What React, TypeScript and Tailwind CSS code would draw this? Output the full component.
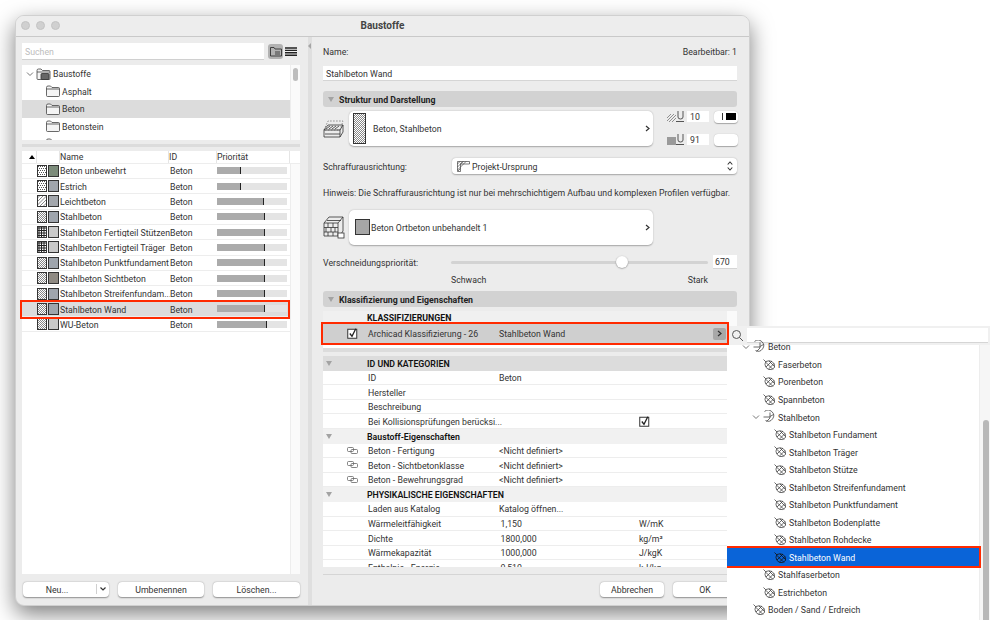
import React from "react";

const font = { fontFamily: '"Roboto", "Liberation Sans", sans-serif' };

function Hatch({ kind = "diag", w = 10, h = 12 }: { kind?: "diag" | "dots" | "grid" | "light"; w?: number; h?: number }) {
  const lines: React.ReactNode[] = [];
  if (kind === "grid") {
    for (let i = 2; i < w; i += 2.5) lines.push(<line key={"v" + i} x1={i} y1={0} x2={i} y2={h} stroke="#222" strokeWidth="1" />);
    for (let i = 2; i < h; i += 2.5) lines.push(<line key={"h" + i} x1={0} y1={i} x2={w} y2={i} stroke="#222" strokeWidth="1" />);
  } else if (kind === "dots") {
    for (let y = 1; y < h; y += 2) for (let x = (y % 4 === 1 ? 1 : 2); x < w; x += 2) lines.push(<rect key={x + "-" + y} x={x} y={y} width="1" height="1" fill="#555" />);
  } else {
    for (let i = -h; i < w + h; i += kind === "light" ? 3.5 : 2) lines.push(<line key={i} x1={i} y1={h} x2={i + h} y2={0} stroke="#555" strokeWidth="0.7" />);
  }
  return (
    <svg width={w} height={h} viewBox={`0 0 ${w} ${h}`} className="shrink-0">
      <rect x="0.5" y="0.5" width={w - 1} height={h - 1} fill="#fff" />
      {lines}
      <rect x="0.5" y="0.5" width={w - 1} height={h - 1} fill="none" stroke="#333" />
    </svg>
  );
}

function Folder({ w = 14, badge }: { w?: number; badge?: boolean }) {
  return (
    <svg width={w} height="12" viewBox="0 0 14 12" fill="none" stroke="#444" strokeWidth="0.8" className="shrink-0">
      <path d="M0.5 10.5V2.5Q0.5 1 2 1H4.5L6 2.5H12.5Q13.5 2.5 13.5 3.5V10.5Q13.5 11.5 12.5 11.5H1.5Q0.5 11.5 0.5 10.5Z" fill="#f4f4f4" />
      <path d="M0.5 4H13.5" />
      {badge && <rect x="4.5" y="5.5" width="8" height="6" rx="1" fill="#666" stroke="#333" />}
    </svg>
  );
}

function Chevron({ open }: { open?: boolean }) {
  return open ? (
    <svg width="8" height="6" viewBox="0 0 8 6" fill="none" stroke="#777" strokeWidth="1" className="shrink-0"><path d="M1 1.5L4 4.5L7 1.5" /></svg>
  ) : (
    <svg width="5" height="7" viewBox="0 0 5 7" fill="none" stroke="#333" strokeWidth="1.2" className="shrink-0"><path d="M1 1L4 3.5L1 6" /></svg>
  );
}

function Leaf({ color = "#444" }: { color?: string }) {
  return (
    <svg width="13" height="13" viewBox="0 0 13 13" fill="none" stroke={color} strokeWidth="0.8" className="shrink-0">
      <path d="M0.5 1.5L3.5 4.5" />
      <path d="M3 3.5Q6 2 9 3.5Q12.5 6 11.5 9.5Q9 12.5 5.5 11.5Q2 9.5 2 6.5Q2 5 3 3.5Z" />
      <path d="M3.5 5L10 11.5M3 9L9 3M6 3L11.5 8.5M5.5 11L11 5.5" />
    </svg>
  );
}

function Branch() {
  return (
    <svg width="13" height="13" viewBox="0 0 13 13" fill="none" stroke="#444" strokeWidth="0.8" className="shrink-0">
      <path d="M1.5 1.5A5.5 5.5 0 1 1 2.5 10.5" />
      <path d="M0.5 7H7M7 2.5V8L3.5 11.5M7 6.5L10.5 4.5" />
    </svg>
  );
}

function LinkIcon() {
  return (
    <svg width="11" height="7" viewBox="0 0 11 7" fill="none" stroke="#666" strokeWidth="0.8" className="shrink-0">
      <rect x="0.5" y="0.5" width="6" height="4" rx="1" />
      <rect x="4" y="2.5" width="6.5" height="4" rx="1" />
    </svg>
  );
}

function Check({ size = 11 }: { size?: number }) {
  return (
    <svg width={size} height={size} viewBox="0 0 11 11" fill="none" className="shrink-0">
      <rect x="0.75" y="1.25" width="9" height="9" fill="#fff" stroke="#333" strokeWidth="1" />
      <path d="M2.8 5.5L5 8.2L8.8 0.8" stroke="#222" strokeWidth="1.3" />
    </svg>
  );
}

function Tri() {
  return <span className="w-0 h-0 border-l-[3.5px] border-r-[3.5px] border-t-[5px] border-l-transparent border-r-transparent border-t-[#a3a3a3] shrink-0" />;
}

const materials: { name: string; kind: "diag" | "dots" | "grid" | "light"; color: string; pr: number }[] = [
  { name: "Beton unbewehrt", kind: "dots", color: "#7b8b7a", pr: 23 },
  { name: "Estrich", kind: "dots", color: "#a0a5ac", pr: 23 },
  { name: "Leichtbeton", kind: "light", color: "#a3a7ad", pr: 46 },
  { name: "Stahlbeton", kind: "diag", color: "#9fa5ad", pr: 47 },
  { name: "Stahlbeton Fertigteil Stützen", kind: "grid", color: "#c9c9c9", pr: 47 },
  { name: "Stahlbeton Fertigteil Träger", kind: "grid", color: "#c9c9c9", pr: 47 },
  { name: "Stahlbeton Punktfundament", kind: "diag", color: "#9fa5ad", pr: 47 },
  { name: "Stahlbeton Sichtbeton", kind: "diag", color: "#8f8a83", pr: 47 },
  { name: "Stahlbeton Streifenfundam...", kind: "diag", color: "#9fa5ad", pr: 47 },
  { name: "Stahlbeton Wand", kind: "diag", color: "#9fa5ad", pr: 47 },
  { name: "WU-Beton", kind: "diag", color: "#c9c9c9", pr: 49 },
];

function MaterialRow({ m }: { m: (typeof materials)[number] }) {
  const sel = m.name === "Stahlbeton Wand";
  return (
    <div className={`h-[15.36px] flex items-center border-b border-[#ededed] ${sel ? "bg-[#dcdcdc] outline-2 outline-[#ff2a00] mr-[2px] relative" : ""}`}>
      <div className="w-[15px] shrink-0" />
      <Hatch kind={m.kind} />
      <span className="w-[11px] h-[12px] ml-[1px] border border-[#333] shrink-0" style={{ backgroundColor: m.color }} />
      <span className="ml-[1px] pt-[2px] w-[110px] shrink-0 whitespace-nowrap overflow-hidden">{m.name}</span>
      <span className="w-[47px] pt-[2px] shrink-0">Beton</span>
      <div className="w-[70px] h-[7px] bg-[#e4e4e4] flex shrink-0">
        <div className="h-full bg-[#ababab] border-r border-[#222] box-content" style={{ width: m.pr }} />
      </div>
    </div>
  );
}

function FolderRow({ label, sel }: { label: string; sel?: boolean }) {
  return (
    <div className={`h-[17.5px] flex items-center pl-[24px] gap-[2px] shrink-0 ${sel ? "bg-[#dcdcdc]" : ""}`}>
      <Folder />
      <span className="pt-[2px]">{label}</span>
    </div>
  );
}

function TreeRow({ label, level, sel, branch }: { label: string; level: number; sel?: boolean; branch?: boolean }) {
  const pad = level === 0 ? "pl-[26px]" : level === 1 ? "pl-[36px]" : "pl-[47px]";
  return (
    <div className={`h-[17.54px] flex items-center gap-[2px] relative shrink-0 ${pad} ${sel ? "bg-[#0a64d8] text-white outline-2 outline-[#ff2a00]" : ""}`}>
      {branch ? <Branch /> : <Leaf color={sel ? "#111" : "#444"} />}
      <span className="pt-[2px]">{label}</span>
    </div>
  );
}

function PropRow({ label, value, num, unit, link, check }: { label: string; value?: string; num?: boolean; unit?: string; link?: boolean; check?: boolean }) {
  return (
    <div className="h-[14.6px] flex items-center bg-white border-b border-[#ededed] shrink-0">
      <div className="w-[45px] shrink-0 flex justify-start pl-[24px]">{link && <LinkIcon />}</div>
      <div className="w-[131px] pt-[2px] shrink-0 whitespace-nowrap">{label}</div>
      <div className={`w-[140px] pt-[2px] shrink-0 ${num ? "pl-[1.5px]" : ""}`}>{value}</div>
      <div className="flex items-center pt-[2px]">{check && <span className="-mt-[2px] flex"><Check size={11} /></span>}{unit}</div>
    </div>
  );
}

function GroupHead({ label, light }: { label: string; light?: boolean }) {
  return (
    <div className={`h-[14.6px] flex items-center shrink-0 font-semibold text-[#111] ${light ? "bg-[#f1f1f1]" : "bg-[#dcdcdc]"}`}>
      <div className="w-[44px] shrink-0 pl-[3px] flex"><Tri /></div>
      <span className="pt-[2px]">{label}</span>
    </div>
  );
}

function SectionBar({ label }: { label: string }) {
  return (
    <div className="h-[16px] rounded-[3px] bg-[#d2d2d2] flex items-center gap-[5px] pl-[5px] font-bold text-[#222] shrink-0">
      <Tri />
      <span className="pt-[2px]">{label}</span>
    </div>
  );
}

function MiniPen({ fill }: { fill?: boolean }) {
  return (
    <div className="flex items-end w-[20px] h-[11px] shrink-0">
      {fill ? (
        <span className="w-[9px] h-[8px] bg-[#9a9a9a] shrink-0" />
      ) : (
        <svg width="9" height="8" viewBox="0 0 9 8" stroke="#777" strokeWidth="0.8" className="shrink-0"><path d="M0 4L4 0M0 7L7 0M2 8L9 1M5 8L9 4" /></svg>
      )}
      <svg width="9" height="11" viewBox="0 0 9 11" fill="none" stroke="#555" strokeWidth="1" className="shrink-0"><path d="M2 0V6Q2 8 4.5 8T7 6V0M0 10.5H8" /></svg>
    </div>
  );
}

function Btn({ label, w }: { label: string; w: string }) {
  return <button className={`${w} h-[15.5px] pt-[2px] bg-white rounded-[4px] shadow-[0_0.5px_1.5px_rgba(0,0,0,0.4)] flex items-center justify-center shrink-0`}>{label}</button>;
}

export default function App() {
  return (
    <div className="relative w-[999px] h-[620px] overflow-hidden bg-white text-[8.75px] leading-none text-[#333]" style={font}>
      {/* window */}
      <div className="absolute left-[15px] top-[15px] w-[735px] h-[591px] bg-[#ececec] rounded-[9px] border border-[#d0d0d0] shadow-[0_8px_22px_rgba(0,0,0,0.5)] flex flex-col overflow-hidden">
        <div className="h-[21px] shrink-0 relative flex items-center justify-center border-b border-[#c9c9c9] bg-[#ededed]">
          <div className="absolute left-[5px] top-[5px] flex gap-[6px]">
            <span className="w-[9px] h-[9px] rounded-full bg-[#d0d0d0] border border-[#c4c4c4]" />
            <span className="w-[9px] h-[9px] rounded-full bg-[#d0d0d0] border border-[#c4c4c4]" />
            <span className="w-[9px] h-[9px] rounded-full bg-[#d0d0d0] border border-[#c4c4c4]" />
          </div>
          <span className="font-bold text-[#444] text-[10px] -mt-[1px]">Baustoffe</span>
        </div>
        <div className="flex-1 flex min-h-0">
          {/* left */}
          <div className="w-[292px] shrink-0 flex flex-col pl-[6px] pr-[8px] pt-[6px] pb-[8px]">
            <div className="h-[17px] flex items-center shrink-0">
              <div className="w-[242px] h-[17px] pt-[2px] bg-white border-b border-[#d0d0d0] flex items-center pl-[3px] text-[#bdbdbd] shrink-0">Suchen</div>
              <div className="w-[15px] h-[15px] ml-[4px] bg-[#b2b2b2] rounded-[3px] flex items-center justify-center shrink-0">
                <svg width="12" height="11" viewBox="0 0 12 11" fill="none" stroke="#333" strokeWidth="0.9"><path d="M0.5 10V1.5H4L5 3H11.5V10Z" /><path d="M5 6H10M5 8H10" /></svg>
              </div>
              <svg width="12" height="9" viewBox="0 0 12 9" stroke="#222" strokeWidth="1.4" className="ml-[2px] shrink-0"><path d="M0 1H12M0 3.4H12M0 5.8H12M0 8.2H12" /></svg>
            </div>
            <div className="h-[75px] mt-[5px] bg-white flex shrink-0 overflow-hidden">
              <div className="w-[268px] shrink-0 flex flex-col">
                <div className="h-[17.5px] flex items-center pl-[4px] shrink-0">
                  <Chevron open />
                  <span className="ml-[2px] flex"><Folder w={15} badge /></span>
                  <span className="ml-[2px] pt-[2px]">Baustoffe</span>
                </div>
                <FolderRow label="Asphalt" />
                <FolderRow label="Beton" sel />
                <FolderRow label="Betonstein" />
                <FolderRow label="" />
              </div>
              <div className="flex-1 bg-[#fafafa] border-l border-[#ededed] pl-[2px] pt-[3px]">
                <div className="w-[5px] h-[13px] rounded-full bg-[#bdbdbd]" />
              </div>
            </div>
            <div className="h-[11px] shrink-0 flex items-center"><div className="w-full h-[3px] bg-[#dcdcdc]" /></div>
            <div className="flex-1 bg-white flex flex-col min-h-0">
              <div className="h-[12.5px] flex items-center border-b border-[#ededed] shrink-0 text-[#333]">
                <span className="w-[14px] pl-[7px] shrink-0 flex"><span className="w-0 h-0 border-l-[3px] border-r-[3px] border-b-[4px] border-l-transparent border-r-transparent border-b-black" /></span>
                <span className="w-[23px] shrink-0 border-l border-[#e5e5e5] h-full" />
                <span className="w-[109px] pt-[2px] shrink-0 border-l border-[#e5e5e5] h-full flex items-center">Name</span>
                <span className="w-[48px] pt-[2px] shrink-0 border-l border-[#e5e5e5] h-full flex items-center">ID</span>
                <span className="w-[73px] pt-[2px] shrink-0 border-l border-[#e5e5e5] h-full flex items-center">Priorität</span>
                <span className="flex-1 border-l border-[#e5e5e5] h-full" />
              </div>
              <div className="flex-1 flex min-h-0">
                <div className="w-[268px] shrink-0 flex flex-col">
                  {materials.map((m) => <MaterialRow key={m.name} m={m} />)}
                </div>
                <div className="flex-1 bg-[#fafafa] border-l border-[#ededed]" />
              </div>
            </div>
            <div className="h-[8px] shrink-0" />
            <div className="flex pl-[1px] gap-[9px] shrink-0">
              <div className="w-[86px] h-[15.5px] bg-white rounded-[4px] shadow-[0_0.5px_1.5px_rgba(0,0,0,0.4)] flex items-center shrink-0">
                <span className="flex-1 pt-[2px] text-center -ml-[5px]">Neu...</span>
                <span className="w-[13px] h-[10px] border-l border-[#d0d0d0] flex items-center justify-center shrink-0">
                  <svg width="6" height="4" viewBox="0 0 6 4" fill="none" stroke="#333" strokeWidth="1.2"><path d="M0.5 0.5L3 3L5.5 0.5" /></svg>
                </span>
              </div>
              <Btn label="Umbenennen" w="w-[86px]" />
              <Btn label="Löschen..." w="w-[87px]" />
            </div>
          </div>
          {/* splitter */}
          <div className="w-[4px] shrink-0 bg-[#dfdfdf] relative">
            <span className="absolute left-0 top-[6px] w-0 h-0 border-t-[3px] border-b-[3px] border-r-[3px] border-t-transparent border-b-transparent border-r-[#a5a5a5]" />
          </div>
          {/* right */}
          <div className="flex-1 min-w-0 flex flex-col pl-[11px] pr-[12px] pt-[10px]">
            <div className="flex justify-between h-[10px] items-center shrink-0"><span>Name:</span><span>Bearbeitbar: 1</span></div>
            <div className="h-[15px] pt-[2px] mt-[9px] bg-white border-b border-[#d5d5d5] flex items-center pl-[3px] shrink-0">Stahlbeton Wand</div>
            <div className="h-[10px] shrink-0" />
            <SectionBar label="Struktur und Darstellung" />
            <div className="h-[36px] mt-[3px] flex items-center shrink-0">
              <svg width="22" height="24" viewBox="0 0 22 24" fill="none" stroke="#333" strokeWidth="0.8" className="shrink-0 mr-[4px]">
                <path d="M1 14L5 5H20L17 14Z" strokeDasharray="1.5 1.5" stroke="#777" />
                <path d="M1 14L5 9H20L17 14ZM1 14V21H17V14M17 21L20 16V9" />
                <path d="M3 13L7 10M6 13L10 10M9 13L13 10M12 13L16 10M2 18H17" />
              </svg>
              <div className="w-[304px] h-[35px] bg-white rounded-[5px] shadow-[0_0.5px_1.5px_rgba(0,0,0,0.3)] flex items-center pl-[4px] pr-[3px] shrink-0">
                <Hatch kind="diag" w={13} h={31} />
                <span className="ml-[7px] pt-[2px] flex-1">Beton, Stahlbeton</span>
                <Chevron />
              </div>
              <div className="ml-[14px] flex flex-col gap-[11px] shrink-0">
                <div className="flex items-center h-[12px]">
                  <MiniPen />
                  <div className="w-[22px] h-[11px] pt-[2px] bg-white flex items-center pl-[3px] shrink-0">10</div>
                  <div className="w-[24px] h-[12px] ml-[5px] bg-white rounded-[4px] shadow-[0_0.5px_1px_rgba(0,0,0,0.3)] flex items-center justify-end gap-[3px] pr-[2px] shrink-0">
                    <span className="w-[1px] h-[7px] bg-[#333]" />
                    <span className="w-[10px] h-[7px] bg-black" />
                  </div>
                </div>
                <div className="flex items-center h-[12px]">
                  <MiniPen fill />
                  <div className="w-[22px] h-[11px] pt-[2px] bg-white flex items-center pl-[3px] shrink-0">91</div>
                  <div className="w-[24px] h-[12px] ml-[5px] bg-white rounded-[4px] shadow-[0_0.5px_1px_rgba(0,0,0,0.3)] shrink-0" />
                </div>
              </div>
            </div>
            <div className="h-[16px] mt-[12px] flex items-center shrink-0">
              <span className="w-[129px] pt-[2px] shrink-0">Schraffurausrichtung:</span>
              <div className="flex-1 h-[16px] bg-white rounded-[4px] shadow-[0_0.5px_1.5px_rgba(0,0,0,0.3)] flex items-center pl-[5px] pr-[4px]">
                <svg width="13" height="11" viewBox="0 0 13 11" fill="none" stroke="#444" strokeWidth="0.7" className="shrink-0"><path d="M0.5 10.5V0.5H12.5V3H3.5V10.5ZM0.5 3L3 0.5M0.5 6L6 0.5M0.5 9L9 0.5M1 10L3.5 7.5M3.5 3L6 0.5" /></svg>
                <span className="ml-[2px] pt-[2px] flex-1">Projekt-Ursprung</span>
                <svg width="6" height="10" viewBox="0 0 6 10" fill="none" stroke="#333" strokeWidth="1.1"><path d="M0.7 3.5L3 1L5.3 3.5M0.7 6.5L3 9L5.3 6.5" /></svg>
              </div>
            </div>
            <div className="h-[10px] pt-[2px] mt-[13px] flex items-center whitespace-nowrap shrink-0">Hinweis: Die Schraffurausrichtung ist nur bei mehrschichtigem Aufbau und komplexen Profilen verfügbar.</div>
            <div className="h-[36px] mt-[12px] flex items-center shrink-0">
              <svg width="22" height="24" viewBox="0 0 22 24" fill="none" stroke="#333" strokeWidth="0.8" className="shrink-0 mr-[4px]">
                <path d="M1 8L6 2H20V16L18 19M1 8H15V21H1ZM15 8L20 2M1 12.5H15M1 17H15M5 8V12.5M10 8V12.5M3 12.5V17M8 12.5V17M12 12.5V17M5 17V21M10 17V21M4 5.5H18" />
                <rect x="15" y="18" width="6" height="5" fill="#fff" />
              </svg>
              <div className="w-[304px] h-[35px] bg-white rounded-[5px] shadow-[0_0.5px_1.5px_rgba(0,0,0,0.3)] flex items-center pl-[6px] pr-[3px] shrink-0">
                <span className="w-[15px] h-[16px] bg-[#a6a6a6] border border-[#333] shrink-0" />
                <span className="ml-[1px] pt-[2px] flex-1">Beton Ortbeton unbehandelt 1</span>
                <Chevron />
              </div>
            </div>
            <div className="h-[14px] mt-[10px] flex items-center shrink-0">
              <span className="w-[128px] pt-[2px] shrink-0">Verschneidungspriorität:</span>
              <div className="w-[257px] h-[3px] bg-[#d3d3d3] rounded-full relative shrink-0">
                <span className="absolute left-[165px] -top-[4.5px] w-[12px] h-[12px] rounded-full bg-white shadow-[0_0.5px_1.5px_rgba(0,0,0,0.45)]" />
              </div>
              <div className="w-[24px] h-[14px] pt-[2px] ml-[5px] bg-white border-b border-[#d5d5d5] flex items-center pl-[2px] shrink-0">670</div>
            </div>
            <div className="h-[10px] mt-[5px] pt-[2px] flex justify-between items-center pl-[128px] pr-[29px] shrink-0"><span>Schwach</span><span>Stark</span></div>
            <div className="h-[7px] shrink-0" />
            <SectionBar label="Klassifizierung und Eigenschaften" />
            <div className="h-[4px] shrink-0" />
            <div className="h-[255.5px] flex shrink-0 w-full">
              <div className="w-[404px] shrink-0 flex flex-col">
                <div className="h-[13px] pt-[2px] bg-[#f0f0f0] flex items-center pl-[44px] font-bold text-[#111] shrink-0">KLASSIFIZIERUNGEN</div>
                <div className="h-[19px] bg-[#cfcfcf] outline-2 outline-[#ff2a00] relative z-10 flex items-center shrink-0">
                  <span className="w-[45px] shrink-0 flex pl-[24px]"><Check /></span>
                  <span className="w-[131px] pt-[2px] shrink-0">Archicad Klassifizierung - 26</span>
                  <span className="flex-1 pt-[2px]">Stahlbeton Wand</span>
                  <span className="w-[13px] h-[12px] mr-[1px] bg-[#a8a8a8] rounded-[2px] flex items-center justify-center shrink-0"><Chevron /></span>
                </div>
                <div className="h-[5px] bg-white shrink-0" />
                <div className="h-[4px] bg-[#dcdcdc] shrink-0" />
                <div className="h-[4px] shrink-0" />
                <GroupHead label="ID UND KATEGORIEN" />
                <PropRow label="ID" value="Beton" />
                <PropRow label="Hersteller" />
                <PropRow label="Beschreibung" />
                <PropRow label="Bei Kollisionsprüfungen berücksi..." check />
                <GroupHead label="Baustoff-Eigenschaften" light />
                <PropRow label="Beton - Fertigung" value="<Nicht definiert>" link />
                <PropRow label="Beton - Sichtbetonklasse" value="<Nicht definiert>" link />
                <PropRow label="Beton - Bewehrungsgrad" value="<Nicht definiert>" link />
                <GroupHead label="PHYSIKALISCHE EIGENSCHAFTEN" light />
                <PropRow label="Laden aus Katalog" value="Katalog öffnen..." />
                <PropRow label="Wärmeleitfähigkeit" value="1,150" num unit="W/mK" />
                <PropRow label="Dichte" value="1800,000" num unit="kg/m³" />
                <PropRow label="Wärmekapazität" value="1000,000" num unit="J/kgK" />
                <div className="flex-1 min-h-0 overflow-hidden">
                  <PropRow label="Enthalpie - Energie" value="0,510" num unit="kJ/kg" />
                </div>
              </div>
              <div className="flex-1 bg-[#fafafa]" />
            </div>
            <div className="h-[8px] shrink-0 border-b border-[#d5d5d5]" />
            <div className="flex justify-end gap-[9px] mt-[7px] shrink-0">
              <Btn label="Abbrechen" w="w-[64px]" />
              <Btn label="OK" w="w-[64px]" />
            </div>
          </div>
        </div>
      </div>

      {/* popover */}
      <div className="absolute left-[727px] top-[326px] w-[272px] h-[294px] flex flex-col overflow-hidden">
        <div className="h-[19px] w-[263px] bg-[#f0f0f0] flex items-center shrink-0 pl-[3px]">
          <svg width="13" height="13" viewBox="0 0 13 13" fill="none" stroke="#555" strokeWidth="1" className="shrink-0 ml-[1px]"><circle cx="5.5" cy="5.5" r="4" /><path d="M8.5 8.5L12 12" /></svg>
          <div className="w-[241px] h-[15px] ml-[3px] bg-white border-b border-[#d5d5d5] shrink-0" />
        </div>
        <div className="flex-1 flex min-h-0 bg-white">
          <div className="w-[252px] shrink-0 flex flex-col -mt-[7px]">
            <div className="relative">
              <TreeRow label="Beton" level={0} branch />
              <span className="absolute left-[15px] top-[6px]"><Chevron open /></span>
            </div>
            <TreeRow label="Faserbeton" level={1} />
            <TreeRow label="Porenbeton" level={1} />
            <TreeRow label="Spannbeton" level={1} />
            <div className="relative">
              <TreeRow label="Stahlbeton" level={1} branch />
              <span className="absolute left-[25px] top-[6px]"><Chevron open /></span>
            </div>
            <TreeRow label="Stahlbeton Fundament" level={2} />
            <TreeRow label="Stahlbeton Träger" level={2} />
            <TreeRow label="Stahlbeton Stütze" level={2} />
            <TreeRow label="Stahlbeton Streifenfundament" level={2} />
            <TreeRow label="Stahlbeton Punktfundament" level={2} />
            <TreeRow label="Stahlbeton Bodenplatte" level={2} />
            <TreeRow label="Stahlbeton Rohdecke" level={2} />
            <TreeRow label="Stahlbeton Wand" level={2} sel />
            <TreeRow label="Stahlfaserbeton" level={1} />
            <TreeRow label="Estrichbeton" level={1} />
            <TreeRow label="Boden / Sand / Erdreich" level={0} />
          </div>
          <div className="w-[11px] shrink-0 bg-[#f6f6f6] border-l border-[#ededed] pl-[3px] pt-[75px]">
            <div className="w-[6px] h-[220px] bg-[#b8b8b8] rounded-t-full" />
          </div>
          <div className="flex-1 bg-white" />
        </div>
      </div>
    </div>
  );
}
